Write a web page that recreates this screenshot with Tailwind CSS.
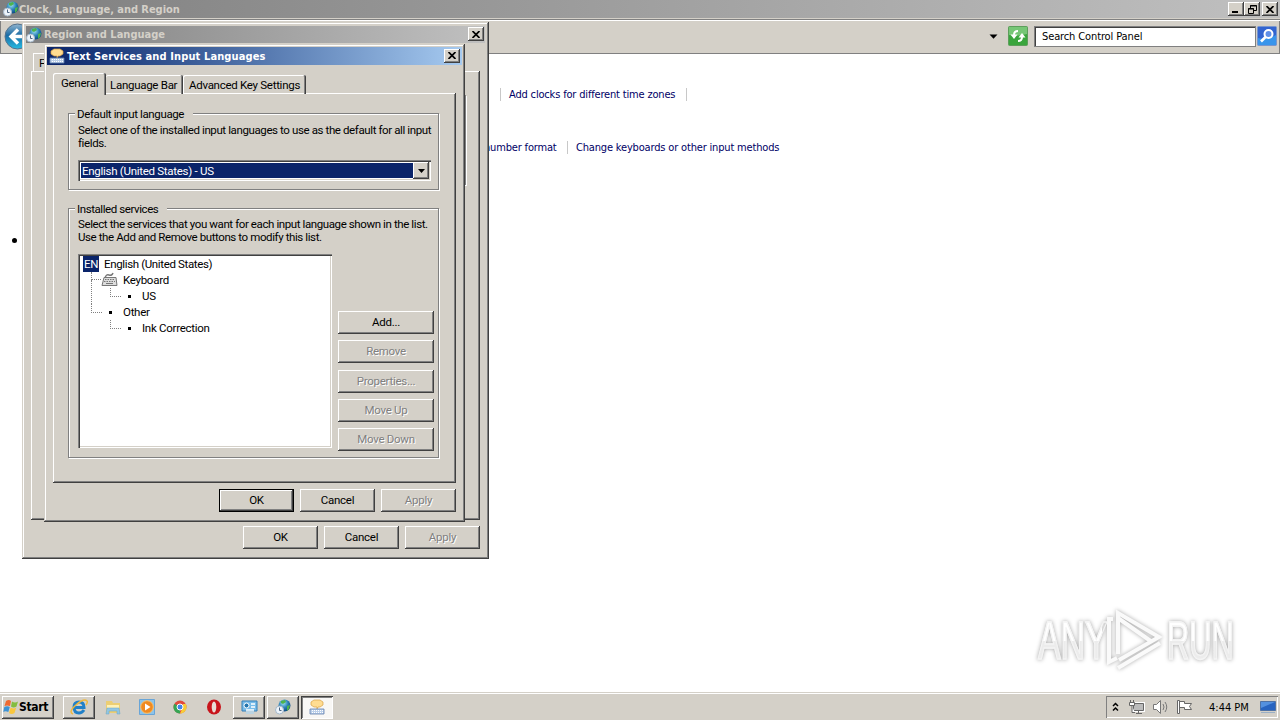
<!DOCTYPE html>
<html lang="en">

<head>
    <meta charset="UTF-8">
    <meta name="viewport" content="width=device-width, initial-scale=1.0">
    <title>Clock, Language, and Region</title>
    <script src="https://cdn.jsdelivr.net/npm/@tailwindcss/browser@4"></script>
</head>

<body class="relative w-[1280px] h-[720px] overflow-hidden bg-white text-black text-[11.5px] leading-[13px] tracking-[-0.28px] whitespace-nowrap font-['Roboto','Liberation_Sans',sans-serif]">

    <!-- shared icons -->
    <svg class="absolute size-0">
        <defs>
            <radialGradient id="globeFill" cx=".4" cy=".3" r=".8">
                <stop offset="0" stop-color="#9fe3f5" />
                <stop offset=".5" stop-color="#287fb5" />
                <stop offset="1" stop-color="#083b73" />
            </radialGradient>
            <linearGradient id="backFill" x2="0" y2="1">
                <stop offset="0" stop-color="#91b5cf" />
                <stop offset=".45" stop-color="#1b6ca5" />
                <stop offset="1" stop-color="#27bce3" />
            </linearGradient>
        </defs>
        <symbol id="globe" viewBox="0 0 16 16">
            <circle cx="9.500" cy="6.500" r="6" fill="url(#globeFill)" />
            <path d="M6 2l4-1 1 2-3 2-2-1zM12 7l3-1-1 4-2 2z" fill="#4db34c" />
            <circle cx="4.500" cy="11" r="4" fill="#edf4fa" stroke="#a5b8ca" />
            <path d="M4.500 8.500v3h2" fill="none" stroke="#4c6580" />
        </symbol>
        <symbol id="textsvc" viewBox="0 0 16 16">
            <path d="M5 1h6l3 2v3l-3 2H9L8 10V8H5L2 6V3z" fill="#ffdc91" stroke="#d9a144" stroke-width=".7" />
            <path d="M1 10h14v5H1z" fill="#bcd0ea" stroke="#6381ad" stroke-width=".8" />
            <path d="M3 11.500h11M3 13.500h11" stroke="#fff" stroke-dasharray="1 1" />
        </symbol>
        <symbol id="close" viewBox="0 0 8 7">
            <path d="M.5 0l7 7M7.500 0l-7 7" stroke="#000" stroke-width="1.700" />
        </symbol>
    </svg>

    <!-- explorer window -->
    <div class="flex flex-col h-[692px]">
        <div class="flex items-center h-[18px] pl-[3px] pr-[2px] bg-linear-to-r from-[#808080] to-[#c0c0c0]">
            <svg class="size-4 shrink-0"><use href="#globe" /></svg>
            <span class="text-[11px] font-bold text-[#d4d0c8] tracking-[-0.04px] font-['DejaVu_Sans_Condensed','DejaVu_Sans',sans-serif]">Clock, Language, and Region</span>
            <div class="flex ml-auto">
                <div class="flex items-end w-4 h-[14px] pl-1 pb-[3px] bg-[#d4d0c8] shadow-[inset_-1px_-1px_#404040,inset_1px_1px_#fff,inset_-2px_-2px_#808080]"><i class="w-[6px] h-[2px] bg-black"></i></div>
                <div class="flex items-center justify-center w-4 h-[14px] bg-[#d4d0c8] shadow-[inset_-1px_-1px_#404040,inset_1px_1px_#fff,inset_-2px_-2px_#808080]">
                    <svg class="w-[9px] h-[9px]" viewBox="0 0 9 9" fill="none" stroke="#000"><path d="M2.500 3V.5h6v5H6M2 1h7M.5 3.500h5v5h-5zM0 4h6" /></svg>
                </div>
                <div class="flex items-center justify-center w-4 h-[14px] ml-[2px] bg-[#d4d0c8] shadow-[inset_-1px_-1px_#404040,inset_1px_1px_#fff,inset_-2px_-2px_#808080]"><svg class="w-2 h-[7px]"><use href="#close" /></svg></div>
            </div>
        </div>
        <div class="flex items-center h-9 pl-1 pr-[3px] bg-[#d4d0c8] shadow-[inset_0_1px_#d4d0c8,inset_0_2px_#808080,inset_0_3px_#fff,inset_-1px_-1px_#808080,inset_1px_0_#808080]">
            <svg class="w-[27px] h-[27px]" viewBox="0 0 27 27">
                <circle cx="13.500" cy="13.500" r="12.500" fill="url(#backFill)" stroke="#53718c" />
                <path d="M22 13.500H8M14 6.500l-7 7 7 7" fill="none" stroke="#fff" stroke-width="3.400" />
            </svg>
            <svg class="w-[9px] h-[5px] ml-auto" viewBox="0 0 9 5"><path d="M.5.5h8L4.500 4.800z" /></svg>
            <svg class="size-5 ml-[10px]" viewBox="0 0 20 20">
                <rect x=".5" y=".5" width="19" height="19" rx="1" fill="#3aa53d" stroke="#5d9e5c" />
                <path d="M1 1h18v7Q9 11 1 9z" fill="#76c676" />
                <path d="M10 5Q6 5 6 9v1M10 15q4 0 4-4v-1" fill="none" stroke="#fff" stroke-width="2" />
                <path d="M2.500 8.500h7L6 13zM10.500 11.500h7L14 7z" fill="#fff" />
            </svg>
            <div class="flex items-center w-[222px] h-[21px] ml-[6px] pl-[7px] pt-px bg-white border border-[#808080] shadow-[inset_1px_1px_#404040] text-[11px] tracking-[-0.12px] font-['DejaVu_Sans_Condensed','DejaVu_Sans',sans-serif]">Search Control Panel</div>
            <svg class="size-5 ml-[1px]" viewBox="0 0 20 20">
                <rect x=".5" y=".5" width="19" height="19" rx="1" fill="#3264d0" stroke="#7896cd" />
                <path d="M1 19V12Q10 14 19 9v10z" fill="#3995eb" />
                <circle cx="11.500" cy="8" r="4" fill="#5f8fe8" stroke="#fff" stroke-width="2" />
                <path d="M8.500 11L4 15.500" stroke="#fff" stroke-width="2.600" />
            </svg>
        </div>
        <div class="grow pl-[500px] pt-[33px] text-[11px] tracking-[-0.17px] text-[#000066] font-['DejaVu_Sans_Condensed','DejaVu_Sans',sans-serif]">
            <div class="flex h-[14px] items-center">
                <span class="w-[187px] border-x border-[#c8c8c8] pl-2">Add clocks for different time zones</span>
            </div>
            <div class="flex h-[14px] mt-[39px] -ml-[16px] items-center">
                <span class="w-[83px]">number format</span>
                <span class="border-l border-[#c8c8c8] pl-2">Change keyboards or other input methods</span>
            </div>
        </div>
    </div>
    <i class="absolute left-[12px] top-[238px] size-[5px] rounded-full bg-black"></i>

    <!-- Region and Language -->
    <div class="absolute left-[22px] top-[22px] w-[467px] h-[537px] p-[4px] bg-[#d4d0c8] shadow-[inset_-1px_-1px_#404040,inset_1px_1px_#d4d0c8,inset_-2px_-2px_#808080,inset_2px_2px_#fff]">
        <div class="flex items-center h-[17px] pr-px bg-linear-to-r from-[#808080] to-[#c0c0c0]">
            <svg class="size-4"><use href="#globe" /></svg>
            <span class="ml-[2px] text-[11px] font-bold text-[#d4d0c8] tracking-[0px] font-['DejaVu_Sans_Condensed','DejaVu_Sans',sans-serif]">Region and Language</span>
            <div class="flex items-center justify-center w-4 h-[14px] -mt-px ml-auto bg-[#d4d0c8] shadow-[inset_-1px_-1px_#404040,inset_1px_1px_#fff,inset_-2px_-2px_#808080]"><svg class="w-2 h-[7px]"><use href="#close" /></svg></div>
        </div>
        <div class="w-[60px] h-[18px] ml-[7px] mt-[10px] pl-[5px] pt-[3px] border-l border-t border-white">F</div>
        <div class="w-[449px] h-[449px] ml-[5px] pt-6 pl-[16px] shadow-[inset_-1px_-1px_#404040,inset_1px_1px_#fff,inset_-2px_-2px_#808080]">
            <div class="w-[419px] h-[90px] border border-[#808080] shadow-[1px_1px_#fff,inset_1px_1px_#fff]"></div>
        </div>
        <div class="flex gap-[6px] mt-[6px] ml-[217px] text-center leading-[23px]">
            <div class="w-[75px] h-[23px] shadow-[inset_-1px_-1px_#404040,inset_1px_1px_#fff,inset_-2px_-2px_#808080]">OK</div>
            <div class="w-[75px] h-[23px] shadow-[inset_-1px_-1px_#404040,inset_1px_1px_#fff,inset_-2px_-2px_#808080]">Cancel</div>
            <div class="w-[75px] h-[23px] shadow-[inset_-1px_-1px_#404040,inset_1px_1px_#fff,inset_-2px_-2px_#808080] text-[#808080] text-shadow-[1px_1px_#fff]">Apply</div>
        </div>
    </div>

    <!-- Text Services and Input Languages -->
    <div class="absolute left-[44px] top-[44px] w-[421px] h-[478px] p-[3px] bg-[#d4d0c8] shadow-[inset_-1px_-1px_#404040,inset_1px_1px_#d4d0c8,inset_-2px_-2px_#808080,inset_2px_2px_#fff]">
        <div class="flex items-center h-[18px] pl-[2px] pr-[2px] bg-linear-to-r from-[#0a246a] to-[#a6caf0]">
            <svg class="size-4"><use href="#textsvc" /></svg>
            <span class="ml-[2px] text-[11px] font-bold text-white tracking-[0.11px] font-['DejaVu_Sans_Condensed','DejaVu_Sans',sans-serif]">Text Services and Input Languages</span>
            <div class="flex items-center justify-center w-4 h-[14px] ml-auto -mt-px bg-[#d4d0c8] shadow-[inset_-1px_-1px_#404040,inset_1px_1px_#fff,inset_-2px_-2px_#808080]"><svg class="w-2 h-[7px]"><use href="#close" /></svg></div>
        </div>

        <div class="flex items-end h-[29px] pl-[6px]">
            <div class="relative z-10 w-[53px] h-[22px] -mb-px pl-2 pt-[4px] bg-[#d4d0c8] rounded-t-[2px] shadow-[inset_-1px_0_#404040,inset_1px_1px_#fff,inset_-2px_0_#808080]">General</div>
            <div class="w-[77px] h-[19px] pl-[4px] pt-[4px] rounded-t-[2px] shadow-[inset_-1px_0_#404040,inset_0_1px_#fff,inset_-2px_0_#808080]">Language Bar</div>
            <div class="w-[123px] h-[19px] pl-[6px] pt-[4px] rounded-t-[2px] shadow-[inset_-1px_0_#404040,inset_1px_1px_#fff,inset_-2px_0_#808080]">Advanced Key Settings</div>
        </div>

        <div class="w-[403px] h-[390px] ml-[6px] -mt-px pt-[20px] pl-[15px] shadow-[inset_-1px_-1px_#404040,inset_1px_1px_#fff,inset_-2px_-2px_#808080]">
            <div class="relative w-[371px] h-[77px] pt-[10px] pl-[9px] border border-[#808080] shadow-[1px_1px_#fff,inset_1px_1px_#fff]">
                <span class="absolute left-[6px] -top-[6px] w-[118px] pl-[2px] bg-[#d4d0c8] tracking-[-0.37px]">Default input language</span>
                <p class="tracking-[-0.39px]">Select one of the installed input languages to use as the default for all input<br>fields.</p>
                <div class="flex w-[353px] h-[21px] mt-[10px] p-[2px] bg-white shadow-[inset_1px_1px_#808080,inset_2px_2px_#404040,inset_-1px_-1px_#fff,inset_-2px_-2px_#d4d0c8]">
                    <div class="grow m-px mr-0 pl-[1px] bg-[#0a246a] text-white leading-[16px]">English (United States) - US</div>
                    <div class="flex items-center justify-center w-4 bg-[#d4d0c8] shadow-[inset_-1px_-1px_#404040,inset_1px_1px_#fff,inset_-2px_-2px_#808080]">
                        <svg class="w-[7px] h-[4px]" viewBox="0 0 7 4"><path d="M0 0h7L3.500 4z" /></svg>
                    </div>
                </div>
            </div>

            <div class="relative w-[371px] h-[250px] mt-[18px] pt-[9px] pl-[9px] border border-[#808080] shadow-[1px_1px_#fff,inset_1px_1px_#fff]">
                <span class="absolute left-[6px] -top-[6px] w-[92px] pl-[2px] bg-[#d4d0c8] tracking-[-0.42px]">Installed services</span>
                <p class="tracking-[-0.4px]">Select the services that you want for each input language shown in the list.<br>Use the Add and Remove buttons to modify this list.</p>
                <div class="flex mt-[10px]">
                    <div class="w-[254px] h-[194px] pl-[5px] pt-[2px] bg-white leading-[16px] shadow-[inset_1px_1px_#808080,inset_2px_2px_#404040,inset_-1px_-1px_#fff,inset_-2px_-2px_#d4d0c8]">
                        <div class="flex h-4 tracking-[-0.36px]"><span class="w-4 mr-[5px] bg-[#0a246a] text-white text-center">EN</span>English (United States)</div>
                        <div class="flex h-4">
                            <i class="w-[10px] ml-[8px] h-2 border-l border-b border-dotted border-[#808080]"></i>
                            <svg class="w-[17px] h-4 mr-[5px]" viewBox="0 0 17 16" fill="none" stroke="#777">
                                <path d="M4 6q1-4 4-3t4-2" stroke-width="1.400" />
                                <path d="M3 5.500h12l1 8H1z" fill="#ddd" />
                                <path d="M4 7.500h10M3 9.500h11" stroke-dasharray="1.500 1" /><path d="M5 11.500h7" />
                            </svg>
                            Keyboard
                        </div>
                        <div class="flex h-4">
                            <i class="w-[19px] ml-[8px] -mt-2 h-6 border-l border-dotted border-[#808080]"></i>
                            <i class="w-[11px] h-[9px] border-l border-b border-dotted border-[#808080]"></i>
                            <i class="size-[3px] ml-[7px] mt-[7px] mr-[11px] bg-black"></i>US
                        </div>
                        <div class="flex h-4">
                            <i class="w-[11px] ml-[8px] h-[9px] border-l border-b border-dotted border-[#808080]"></i>
                            <i class="size-[3px] ml-[7px] mt-[7px] mr-[11px] bg-black"></i>Other
                        </div>
                        <div class="flex h-4">
                            <i class="w-[11px] ml-[27px] h-[9px] border-l border-b border-dotted border-[#808080]"></i>
                            <i class="size-[3px] ml-[7px] mt-[7px] mr-[11px] bg-black"></i>Ink Correction
                        </div>
                    </div>
                    <div class="flex flex-col gap-[6.300px] mt-[57px] ml-[6px] w-[96px] text-center leading-[23px] text-[#808080] text-shadow-[1px_1px_#fff]">
                        <div class="h-[23px] text-black text-shadow-none shadow-[inset_-1px_-1px_#404040,inset_1px_1px_#fff,inset_-2px_-2px_#808080]">Add...</div>
                        <div class="h-[23px] shadow-[inset_-1px_-1px_#404040,inset_1px_1px_#fff,inset_-2px_-2px_#808080]">Remove</div>
                        <div class="h-[23px] shadow-[inset_-1px_-1px_#404040,inset_1px_1px_#fff,inset_-2px_-2px_#808080]">Properties...</div>
                        <div class="h-[23px] shadow-[inset_-1px_-1px_#404040,inset_1px_1px_#fff,inset_-2px_-2px_#808080]">Move Up</div>
                        <div class="h-[23px] shadow-[inset_-1px_-1px_#404040,inset_1px_1px_#fff,inset_-2px_-2px_#808080]">Move Down</div>
                    </div>
                </div>
            </div>
        </div>

        <div class="flex gap-[6px] mt-[6px] ml-[172px] text-center leading-[23px]">
            <div class="w-[75px] h-[23px] border border-black leading-[21px] shadow-[inset_-1px_-1px_#404040,inset_1px_1px_#fff,inset_-2px_-2px_#808080]">OK</div>
            <div class="w-[75px] h-[23px] shadow-[inset_-1px_-1px_#404040,inset_1px_1px_#fff,inset_-2px_-2px_#808080]">Cancel</div>
            <div class="w-[75px] h-[23px] shadow-[inset_-1px_-1px_#404040,inset_1px_1px_#fff,inset_-2px_-2px_#808080] text-[#808080] text-shadow-[1px_1px_#fff]">Apply</div>
        </div>
    </div>

    <!-- watermark -->
    <div class="absolute left-[1038px] top-[608px] flex items-center w-[196px] h-[66px] text-[53px] leading-[66px] tracking-[0px] font-['Liberation_Sans',sans-serif] drop-shadow-[0_0_2px_#a8a8a8]">
        <span class="w-[100px] -mr-[34px] shrink-0 origin-left scale-x-[0.64] bg-linear-to-b from-white from-50% to-[#ececec] to-50% bg-clip-text text-transparent [-webkit-text-stroke:1.5px_#f4f4f4]">ANY</span>
        <svg class="w-[60px] h-[66px] shrink-0" viewBox="0 0 60 66" fill="none" stroke="#fafafa" stroke-width="4">
            <path d="M14 46V5l41 24-40 23M14 10l34 24" />
            <path d="M9 11H5v43l8-4M14 60l42-25" />
        </svg>
        <span class="w-[116px] ml-[3px] shrink-0 origin-left scale-x-[0.58] bg-linear-to-b from-white from-50% to-[#ececec] to-50% bg-clip-text text-transparent [-webkit-text-stroke:1.5px_#f4f4f4]">RUN</span>
    </div>

    <!-- taskbar -->
    <div class="flex items-center h-7 pt-[2px] pl-[2px] pr-[2px] bg-[#d4d0c8] shadow-[inset_0_1px_#d4d0c8,inset_0_2px_#fff]">
        <div class="flex items-center w-[52px] h-[23px] pl-[1px] text-[12px] font-bold tracking-[-0.3px] font-['DejaVu_Sans_Condensed','DejaVu_Sans',sans-serif] shadow-[inset_-1px_-1px_#404040,inset_1px_1px_#fff,inset_-2px_-2px_#808080]">
            <svg class="size-4" viewBox="0 0 16 16">
                <path d="M3 2q3-2 5 0L7 7Q4 6 1.500 7z" fill="#ef6a32" />
                <path d="M9 2.500q3 2 6 0L13.500 7.500q-3 2-5.500 0z" fill="#83bd40" />
                <path d="M1.300 8q3-1.500 5.500 0l-1.500 5q-3-1.500-5 0z" fill="#3d93d5" />
                <path d="M7.700 8.500q3 2 5.500 0L11.500 14q-3 2-5.500 0z" fill="#fac73d" />
            </svg>
            Start
        </div>
        <div class="flex items-center justify-center w-8 h-[23px] ml-[9px] shadow-[inset_-1px_-1px_#404040,inset_1px_1px_#fff,inset_-2px_-2px_#808080]">
            <svg class="w-[18px] h-4" viewBox="0 0 18 16" fill="none">
                <path d="M14 11q-2 3-5 3-5 0-5-6 0-5 5-5t5 5.500H5" stroke="#2180c8" stroke-width="3" />
                <path d="M3 15Q-2 13 6 6t11-4q1 1-1 4" stroke="#efb83e" stroke-width="1.500" />
            </svg>
        </div>
        <svg class="size-4 ml-[10px]" viewBox="0 0 16 16">
            <path d="M1 2h6l1 2h7v10H1z" fill="#ecce73" />
            <path d="M2 6h12v3H2z" fill="#fff1b5" />
            <path d="M1 15l1-6h12l1 6h-3v-3H4v3z" fill="#91c6e5" stroke="#6aa5c5" stroke-width=".5" />
        </svg>
        <svg class="size-4 ml-[18px]" viewBox="0 0 16 16">
            <path d="M.5.5h15v15H.5z" fill="#8dc4ea" stroke="#69a5d7" />
            <circle cx="8" cy="8" r="6.300" fill="#f08a20" stroke="#fac26c" />
            <path d="M6 4.500L11.500 8 6 11.500z" fill="#fff" />
        </svg>
        <svg class="size-4 ml-[17px]" viewBox="0 0 16 16">
            <circle cx="8" cy="8" r="6.500" fill="#e24b3c" />
            <path d="M2.400 4.700L8 8v6.500A6.500 6.500 0 0 1 2.400 4.700z" fill="#36a554" />
            <path d="M8 14.500L11 8V5h2.800A6.500 6.500 0 0 1 8 14.500z" fill="#f8cd36" />
            <circle cx="8" cy="8" r="3" fill="#4385e9" stroke="#fff" />
        </svg>
        <svg class="size-4 ml-[18px]" viewBox="0 0 16 16">
            <ellipse cx="8" cy="8" rx="7" ry="7.500" fill="#c8141b" />
            <ellipse cx="8" cy="8" rx="2.300" ry="5.500" fill="#e8dcd5" />
        </svg>
        <div class="flex items-center justify-center w-8 h-[23px] ml-[11px] shadow-[inset_-1px_-1px_#404040,inset_1px_1px_#fff,inset_-2px_-2px_#808080]">
            <svg class="w-[17px] h-4" viewBox="0 0 17 16">
                <path d="M1 2h15v10H1z" fill="#79bce9" stroke="#347fb7" />
                <circle cx="5.500" cy="6.500" r="2.500" fill="#2475ae" stroke="#fff" />
                <path d="M10 5h4M10 8h4M5 11h8" stroke="#fff" stroke-width="1.500" /><path d="M5 12h8v3H5z" fill="#bad3e2" />
            </svg>
        </div>
        <div class="flex items-center justify-center w-8 h-[23px] ml-[2px] shadow-[inset_-1px_-1px_#404040,inset_1px_1px_#fff,inset_-2px_-2px_#808080]">
            <svg class="size-4"><use href="#globe" /></svg>
        </div>
        <div class="flex items-center justify-center w-8 h-[23px] ml-[2px] bg-[#f8f7f5] shadow-[inset_1px_1px_#404040,inset_-1px_-1px_#fff,inset_2px_2px_#808080]">
            <svg class="size-4"><use href="#textsvc" /></svg>
        </div>
        <div class="flex items-center w-[172px] h-[22px] ml-auto pl-[6px] shadow-[inset_1px_1px_#808080,inset_-1px_-1px_#fff] text-[11px] tracking-[0px] font-['DejaVu_Sans_Condensed','DejaVu_Sans',sans-serif]">
            <svg class="w-[7px] h-[10px]" viewBox="0 0 7 10" fill="none" stroke="#000" stroke-width="1.500"><path d="M1 4l2.500-2.500L6 4M1 8.500L3.500 6 6 8.500" /></svg>
            <svg class="w-[17px] h-4 ml-[9px]" viewBox="0 0 17 16" fill="none" stroke="#666">
                <path d="M5.500 4.500h10v7h-10z" fill="#bbb" stroke="#fff" stroke-width="3" /><path d="M5.500 4.500h10v7h-10zM8 14.500h6M10.500 12v2" fill="#bbb" />
                <path d="M1.500 3.500h5v3h-5zM2.500 1v2M5.500 1v2M4 7v6.500h3" fill="#fff" />
            </svg>
            <svg class="w-[17px] h-4 ml-[7px]" viewBox="0 0 17 16" fill="none" stroke="#777">
                <path d="M1.500 5.500h3l4-4v13l-4-4h-3z" fill="#fff" /><path d="M11 5q2 3 0 6M13 3q3.500 5 0 10" />
            </svg>
            <svg class="w-[17px] h-4 ml-[7px]" viewBox="0 0 17 16" stroke="#666" fill="#fff">
                <path d="M1.500 1.500h2v13h-2zM3.500 2.500h5v2h7l-2 3 2 3h-7v-2h-5z" />
            </svg>
            <span class="ml-[16px]">4:44 PM</span>
            <svg class="w-4 h-[14px] ml-auto mr-[2px]" viewBox="0 0 16 14">
                <path d="M.5 1.500h15v9H.5z" fill="#2864c0" stroke="#4f72a5" /><path d="M1 2h14L1 8z" fill="#5491df" /><path d="M1 12h14v1H1z" fill="#9aafc5" />
            </svg>
        </div>
    </div>
</body>

</html>
